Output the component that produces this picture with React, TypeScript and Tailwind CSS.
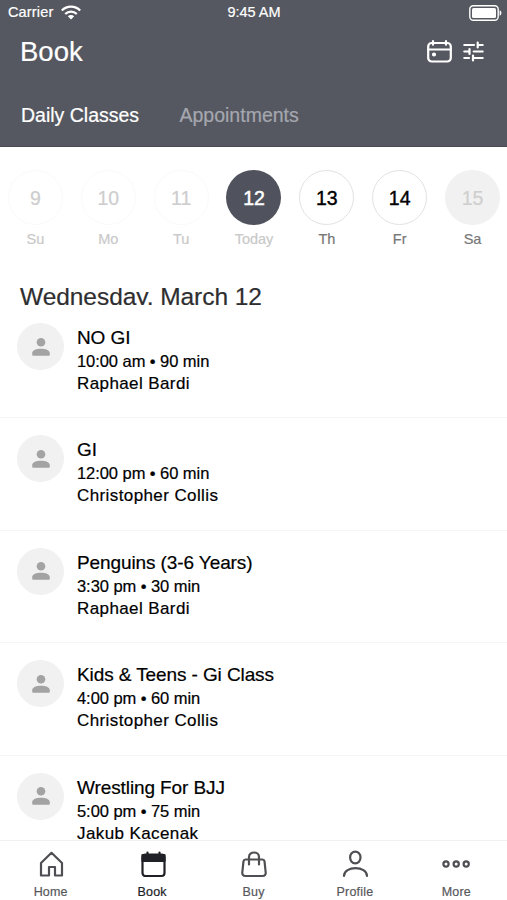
import type { ReactNode } from "react";

type Day = { num: string; label: string; state: "past" | "today" | "open" | "closed" };
type GymClass = { name: string; time: string; mins: number; coach: string };

const DAYS: Day[] = [
  { num: "9", label: "Su", state: "past" },
  { num: "10", label: "Mo", state: "past" },
  { num: "11", label: "Tu", state: "past" },
  { num: "12", label: "Today", state: "today" },
  { num: "13", label: "Th", state: "open" },
  { num: "14", label: "Fr", state: "open" },
  { num: "15", label: "Sa", state: "closed" },
];

const CIRCLE = {
  past: "border border-[#fafafa] text-[#cdcdcd]",
  today: "bg-[#50535d] text-white [-webkit-text-stroke:0.5px]",
  open: "border border-[#e2e2e2] text-black [-webkit-text-stroke:0.4px]",
  closed: "bg-[#f1f1f1] text-[#cfcfcf]",
};
const DAY_LABEL = {
  past: "text-[#c9c9c9]",
  today: "text-[#c9c9c9]",
  open: "text-[#777777]",
  closed: "text-[#777777]",
};

const CLASSES: GymClass[] = [
  { name: "NO GI", time: "10:00 am", mins: 90, coach: "Raphael Bardi" },
  { name: "GI", time: "12:00 pm", mins: 60, coach: "Christopher Collis" },
  { name: "Penguins (3-6 Years)", time: "3:30 pm", mins: 30, coach: "Raphael Bardi" },
  { name: "Kids & Teens - Gi Class", time: "4:00 pm", mins: 60, coach: "Christopher Collis" },
  { name: "Wrestling For BJJ", time: "5:00 pm", mins: 75, coach: "Jakub Kacenak" },
];

function Avatar() {
  return (
    <div className="mt-[17px] flex h-[47px] w-[47px] shrink-0 items-center justify-center rounded-full bg-[#f1f1f1]">
      <svg viewBox="0 0 18 18" fill="#a3a3a3" className="h-[18px] w-[18px]">
        <circle cx="9" cy="4.3" r="4.3" />
        <path d="M0.2 16.4v-1.2c0-3 4.4-4.4 8.8-4.4s8.8 1.4 8.8 4.4v1.2c0 .8-.5 1.4-1.3 1.4h-15c-.8 0-1.3-.6-1.3-1.4z" />
      </svg>
    </div>
  );
}

function Tab({ label, active, children }: { label: string; active?: boolean; children: ReactNode }) {
  return (
    <div className="flex flex-1 flex-col items-center pt-[9px]">
      <svg viewBox="0 0 28 28" fill="none" stroke={active ? "#202126" : "#4f4f53"} strokeWidth={2.2}
        strokeLinejoin="round" strokeLinecap="round" className="h-7 w-7">
        {children}
      </svg>
      <span className={`mt-[6px] text-[12.5px] leading-4 tracking-[0.2px] ${active ? "text-[#202126]" : "text-[#58585c]"}`}>{label}</span>
    </div>
  );
}

export default function App() {
  return (
    <div className="flex h-[900px] w-[507px] flex-col overflow-hidden bg-white font-['Liberation_Sans',Arial,sans-serif] text-black [-webkit-text-stroke:0.2px]">
      <header className="h-[147px] shrink-0 border-b border-[#474954] bg-[#555860] text-white">
        {/* Status bar */}
        <div className="grid h-6 grid-cols-3 items-center pl-2 pr-[5px] pt-px text-[14.5px]">
          <div className="flex items-center gap-2">
            <span className="tracking-[0.15px]">Carrier</span>
            <svg viewBox="0 0 20 15" fill="none" stroke="white" strokeWidth={2.2} className="h-[15px] w-5">
              <path d="M0.8 5.5c5.2-5.2 13.2-5.2 18.4 0M4.2 9c3.3-3.2 8.3-3.2 11.6 0" />
              <path d="M10 14.6 6.8 11.3c1.8-1.6 4.6-1.6 6.4 0z" fill="white" stroke="none" />
            </svg>
          </div>
          <span className="-ml-0.5 text-center">9:45 AM</span>
          <svg viewBox="0 0 33 16" className="h-4 w-[33px] justify-self-end">
            <rect x="0.8" y="0.8" width="28.4" height="14.4" rx="3.5" fill="none" stroke="white" strokeWidth={1.4} />
            <rect x="3" y="3" width="24" height="10" rx="1.5" fill="white" />
            <path d="M30.6 5.3c2.4.6 2.4 4.8 0 5.4z" fill="white" />
          </svg>
        </div>

        <div className="flex h-[55px] items-center justify-between pl-5 pr-[23px]">
          <h1 className="text-[27.5px] leading-8">Book</h1>
          <div className="flex items-center gap-[11px]">
            <svg viewBox="0 0 25 23" fill="none" stroke="white" strokeWidth={2.2} strokeLinecap="round" className="h-[23px] w-[25px]">
              <rect x="1.2" y="3" width="22.6" height="18.5" rx="3.5" />
              <path d="M1 9.5h23M6 1.2v3.5M19 1.2v3.5" />
              <circle cx="7" cy="14.5" r="1" fill="white" />
            </svg>
            <svg viewBox="0 0 21 21" fill="none" stroke="white" strokeWidth={2.2} strokeLinecap="round" className="h-[21px] w-[21px]">
              <path d="M1.3 4h9.7M14.7 1.5v5M15 4h4.7M1.3 10.5H6M6.5 8v5M10.7 10.5h9M1.3 17H6M10 14.5v5M10.5 17h9.2" />
            </svg>
          </div>
        </div>

        <div className="flex items-center pl-[21px] pt-6 text-[19.5px] leading-6">
          <span className="w-[158.5px]">Daily Classes</span>
          <span className="text-[#a5a7af]">Appointments</span>
        </div>
      </header>

      {/* Week strip */}
      <div className="flex h-[132px] shrink-0 pt-[23px]">
        <div className="-ml-px grid w-[510px] shrink-0 grid-cols-7">
          {DAYS.map(d => (
            <div key={d.num} className="flex flex-col items-center">
              <div className={`flex h-[55px] w-[55px] items-center justify-center rounded-full pt-0.5 text-[19.5px] ${CIRCLE[d.state]}`}>{d.num}</div>
              <span className={`mt-[4px] text-[14.5px] leading-5 ${DAY_LABEL[d.state]}`}>{d.label}</span>
            </div>
          ))}
        </div>
      </div>

      <div className="flex min-h-0 flex-1 flex-col overflow-hidden">
        <h2 className="mb-px h-[26px] shrink-0 overflow-hidden pl-5 pt-[4px] text-[24.5px] leading-7 tracking-[-0.05px] text-[#2e2e30]">Wednesday, March 12</h2>
        {CLASSES.map(c => (
          <div key={c.name} className="flex h-[112.4px] shrink-0 border-b border-[#f5f5f5] pl-[17px]">
            <Avatar />
            <div className="ml-[13px] pt-5">
              <p className="text-[19px] leading-6 tracking-[-0.1px]">{c.name}</p>
              <p className="text-[16.5px] leading-[23px] tracking-[-0.06px]">{c.time} • {c.mins} min</p>
              <p className="text-[17px] leading-[22px] tracking-[0.4px]">{c.coach}</p>
            </div>
          </div>
        ))}
      </div>

      {/* Tab bar */}
      <nav className="flex h-[60px] shrink-0 border-t border-[#f1f1f1] bg-white">
        <Tab label="Home">
          <path d="M4 13 14.5 2.8 25 13V25.5h-7V17h-6v8.5H4z" />
        </Tab>
        <Tab label="Book" active>
          <rect x="4.5" y="4.5" width="22" height="21.5" rx="3" />
          <path d="M4.5 5h22v6h-22zM9.5 2.5v3M21.5 2.5v3" fill="#202126" />
        </Tab>
        <Tab label="Buy">
          <path d="M5.5 9.5h17c1 0 1.8.7 2 1.7l1.2 11.3c.2 2-1 3.5-3 3.5H5.3c-2 0-3.2-1.5-3-3.5L3.5 11.2c.2-1 1-1.7 2-1.7z" />
          <path d="M9 14.5V7c0-6 10-6 10 0v7.5" />
        </Tab>
        <Tab label="Profile">
          <ellipse cx="14.3" cy="7.5" rx="5.2" ry="5.9" />
          <path d="M3 26c0-10.5 23-10.5 23 0" />
        </Tab>
        <Tab label="More">
          <circle cx="4" cy="14" r="2.6" />
          <circle cx="14.2" cy="14" r="2.6" />
          <circle cx="24.2" cy="14" r="2.6" />
        </Tab>
      </nav>
    </div>
  );
}
